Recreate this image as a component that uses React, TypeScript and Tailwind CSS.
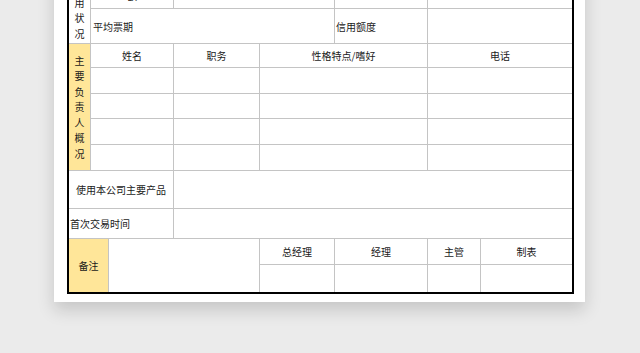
const font = { fontFamily: '"Noto Sans CJK SC", "Noto Sans", sans-serif' }

function Cell({
  className = '',
  tone = 'bg-white',
  children,
}: {
  className?: string
  tone?: string
  children?: React.ReactNode
}) {
  return (
    <div className={`${tone} flex items-center justify-center overflow-hidden whitespace-nowrap ${className}`}>
      {children}
    </div>
  )
}

function Vertical({ text }: { text: string }) {
  return (
    <div className="flex flex-col items-center leading-[15.5px]">
      {text.split('').map((ch, i) => (
        <span key={i}>{ch}</span>
      ))}
    </div>
  )
}

export default function App() {
  return (
    <div className="w-[640px] h-[353px] overflow-hidden bg-[#ebebeb]" style={font}>
      <div className="ml-[54px] w-[531px] -mt-[30px] pt-[12px] pb-[8px] pl-[13px] pr-[11px] bg-white shadow-[0_8px_16px_rgba(0,0,0,0.16)]">
        <div className="grid grid-cols-[21px_17px_64px_85px_74px_92px_52px_91px] grid-rows-[24px_34px_23px_25px_24px_25px_25px_37px_29px_25px_27px] gap-px bg-[#c4c4c4] border-2 border-black text-[10px] text-[#1a1a1a]">
          {/* 信用状况 */}
          <Cell className="row-span-2 flex-col !justify-end pb-[2px]">
            <Vertical text="信用状况" />
          </Cell>
          <Cell className="col-span-2 !items-end pb-[6px] leading-[13px]">额</Cell>
          <Cell className="col-span-2" />
          <Cell />
          <Cell className="col-span-2" />

          <Cell className="col-span-4 !justify-start pl-[2px]">平均票期</Cell>
          <Cell className="!justify-start pl-[1px]">信用额度</Cell>
          <Cell className="col-span-2" />

          {/* 主要负责人概况 */}
          <Cell className="row-span-5" tone="bg-[#ffe699]">
            <Vertical text="主要负责人概况" />
          </Cell>
          <Cell className="col-span-2">姓名</Cell>
          <Cell>职务</Cell>
          <Cell className="col-span-2">性格特点/嗜好</Cell>
          <Cell className="col-span-2">电话</Cell>
          {Array.from({ length: 4 }).map((_, i) => (
            <div key={i} className="contents">
              <Cell className="col-span-2" />
              <Cell />
              <Cell className="col-span-2" />
              <Cell className="col-span-2" />
            </div>
          ))}

          <Cell className="col-span-3">使用本公司主要产品</Cell>
          <Cell className="col-span-5" />

          <Cell className="col-span-3 !justify-start pl-[1px]">首次交易时间</Cell>
          <Cell className="col-span-5" />

          {/* 备注与签字 */}
          <Cell className="col-span-2 row-span-2" tone="bg-[#ffe699]">备注</Cell>
          <Cell className="col-span-2 row-span-2" />
          <Cell>总经理</Cell>
          <Cell>经理</Cell>
          <Cell>主管</Cell>
          <Cell>制表</Cell>
          <Cell />
          <Cell />
          <Cell />
          <Cell />
        </div>
      </div>
    </div>
  )
}
